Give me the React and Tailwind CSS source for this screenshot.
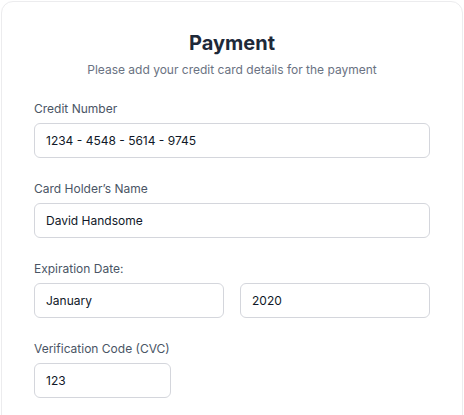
import { useState } from 'react';

function Field({ label, value, onChange, className = '' }) {
  return (
    <div className={className}>
      <label className="block text-xs leading-5 text-gray-600 mb-1">{label}</label>
      <FieldInput value={value} onChange={onChange} />
    </div>
  );
}

function FieldInput({ value, onChange, className = 'w-full' }) {
  return (
    <input
      type="text"
      value={value}
      onChange={(e) => onChange(e.target.value)}
      className={`${className} h-[35px] px-[11px] rounded-md border border-[#d4d6dc] bg-white text-xs text-gray-900 focus:outline-none`}
    />
  );
}

export default function App() {
  const [card, setCard] = useState('1234 - 4548 - 5614 - 9745');
  const [name, setName] = useState('David Handsome');
  const [month, setMonth] = useState('January');
  const [year, setYear] = useState('2020');
  const [cvc, setCvc] = useState('123');

  return (
    <div className="w-[464px] h-[415px] bg-white overflow-hidden pt-px pl-px" style={{ fontFamily: 'Inter, "Noto Sans", sans-serif' }}>
      <div className="w-[462px] h-[430px] border border-[#ececee] rounded-xl bg-white px-8 pt-[27px]">
        <h1 className="text-center text-xl leading-7 font-bold text-gray-800">Payment</h1>
        <p className="mt-[5px] text-center text-xs leading-4 text-gray-500">Please add your credit card details for the payment</p>

        <div className="mt-[21px] flex flex-col gap-[21px]">
          <Field label="Credit Number" value={card} onChange={setCard} />
          <Field label="Card Holder’s Name" value={name} onChange={setName} />
          <div>
            <label className="block text-xs leading-5 text-gray-600 mb-1">Expiration Date:</label>
            <div className="grid grid-cols-2 gap-4">
              <FieldInput value={month} onChange={setMonth} />
              <FieldInput value={year} onChange={setYear} />
            </div>
          </div>
          <div>
            <label className="block text-xs leading-5 text-gray-600 mb-1">Verification Code (CVC)</label>
            <FieldInput value={cvc} onChange={setCvc} className="w-[137px]" />
          </div>
        </div>
      </div>
    </div>
  );
}
